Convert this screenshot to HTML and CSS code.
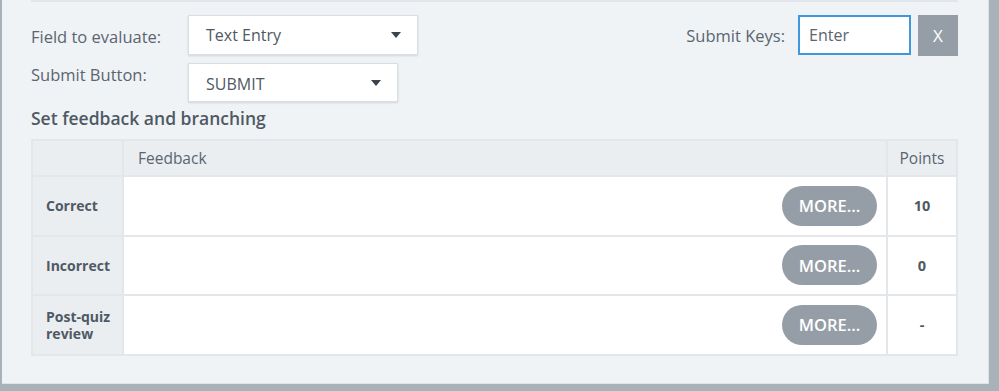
FILE: index.html
```html
<!DOCTYPE html>
<html lang="en">
<head>
    <meta charset="UTF-8">
    <title>Feedback and branching</title>
    <link rel="stylesheet" href="styles.css">
</head>
<body>
    <div class="panel">
        <div class="top-rule"></div>

        <div class="settings">
            <div class="fields">
                <div class="field-row">
                    <label class="field-label">Field to evaluate:</label>
                    <div class="select select-wide">
                        <span>Text Entry</span>
                        <span class="caret"></span>
                    </div>
                </div>
                <div class="field-row field-row-top">
                    <label class="field-label">Submit Button:</label>
                    <div class="select select-narrow">
                        <span>SUBMIT</span>
                        <span class="caret"></span>
                    </div>
                </div>
            </div>

            <div class="keys">
                <label class="field-label">Submit Keys:</label>
                <div class="keys-input">Enter</div>
                <button class="clear-btn">X</button>
            </div>
        </div>

        <h3 class="section-title">Set feedback and branching</h3>

        <table class="feedback">
            <colgroup>
                <col class="w-label">
                <col class="w-feedback">
                <col class="w-points">
            </colgroup>
            <tr class="head">
                <th></th>
                <th class="col-feedback">Feedback</th>
                <th class="col-points">Points</th>
            </tr>
            <tr>
                <td class="col-label">Correct</td>
                <td class="col-feedback"><button class="more">MORE...</button></td>
                <td class="col-points">10</td>
            </tr>
            <tr>
                <td class="col-label">Incorrect</td>
                <td class="col-feedback"><button class="more">MORE...</button></td>
                <td class="col-points">0</td>
            </tr>
            <tr>
                <td class="col-label">Post-quiz review</td>
                <td class="col-feedback"><button class="more">MORE...</button></td>
                <td class="col-points">-</td>
            </tr>
        </table>
    </div>
</body>
</html>
```

FILE: styles.css
```css
body {
    margin: 0;
    padding: 0 10px 0 2px;
    background-color: #a9b1b9;
    font-family: "Open Sans", Arial, sans-serif;
    color: #5a6570;
}

.panel {
    background-color: #f0f3f6;
    height: 383px;
    padding: 0 30px 0 29px;
    border-right: 1px solid #dfe3e7;
    border-bottom: 1px solid #dfe3e7;
    margin-bottom: 7px;
}

.top-rule {
    height: 2px;
    background-color: #e2e6ea;
}

.settings {
    display: flex;
    justify-content: space-between;
    padding-top: 13px;
}

.fields {
    display: flex;
    flex-direction: column;
    gap: 8px;
}

.field-row {
    display: flex;
    align-items: center;
}

.field-row-top {
    align-items: flex-start;
}

.field-label {
    font-size: 16.5px;
    color: #5a6570;
}

.fields .field-label {
    width: 157px;
    padding-top: 2px;
}

.field-row-top .field-label {
    padding-top: 0;
}

.select {
    box-sizing: border-box;
    display: flex;
    align-items: center;
    justify-content: space-between;
    background: #fff;
    border: 1px solid #d9dee3;
    box-shadow: 0 1px 2px rgba(0, 0, 0, 0.12);
    padding: 0 16px 0 17px;
    font-size: 16px;
    color: #4f5963;
}

.select-wide {
    width: 230px;
    height: 40px;
}

.select-narrow {
    width: 210px;
    height: 39px;
}

.select-narrow span:first-child {
    padding-top: 3px;
}

.caret {
    width: 0;
    height: 0;
    border-left: 5px solid transparent;
    border-right: 5px solid transparent;
    border-top: 6px solid #3c434a;
}

.keys {
    display: flex;
    align-items: flex-start;
}

.keys .field-label {
    margin-right: 13px;
    line-height: 42px;
}

.keys-input {
    box-sizing: border-box;
    width: 113px;
    height: 40px;
    border: 2px solid #3f97de;
    background: #fff;
    padding: 0 9px;
    line-height: 36px;
    font-size: 16px;
    color: #5a6570;
}

.clear-btn {
    width: 40px;
    height: 41px;
    margin-left: 7px;
    border: none;
    background-color: #959ea6;
    color: #fff;
    font-family: "Open Sans", Arial, sans-serif;
    font-size: 17px;
    padding: 0;
}

.section-title {
    margin: 4px 0 0 0;
    height: 33px;
    font-size: 17.5px;
    font-weight: 600;
    color: #4f5963;
}

.feedback {
    width: 927px;
    table-layout: fixed;
    border-collapse: collapse;
    border: 2px solid #e3e7eb;
    font-size: 14px;
}

.w-label {
    width: 91px;
}

.w-points {
    width: 70px;
}

.feedback th,
.feedback td {
    border: 2px solid #e3e7eb;
    padding: 0;
}

.feedback .head th {
    height: 34px;
    background-color: #ebeef1;
    font-size: 15.5px;
    font-weight: normal;
    color: #5a6570;
    text-align: left;
}

.feedback td {
    height: 57.6px;
    background: #fff;
}

td.col-label {
    padding-left: 13px;
    background-color: #ebeef1;
    font-weight: 700;
    color: #4f5963;
    line-height: 17px;
}

th.col-feedback {
    padding-left: 14px;
}

td.col-feedback {
    text-align: right;
    padding-right: 9px;
}

.feedback .head th.col-points,
.feedback td.col-points {
    text-align: center;
}

td.col-points {
    font-weight: 700;
    font-size: 14.5px;
    color: #4f5963;
}

.more {
    width: 95px;
    height: 40px;
    border: none;
    border-radius: 20px;
    background-color: #959ea6;
    color: #fff;
    font-family: "Open Sans", Arial, sans-serif;
    font-size: 16.5px;
    font-weight: 600;
    vertical-align: middle;
    padding: 0;
}
```
